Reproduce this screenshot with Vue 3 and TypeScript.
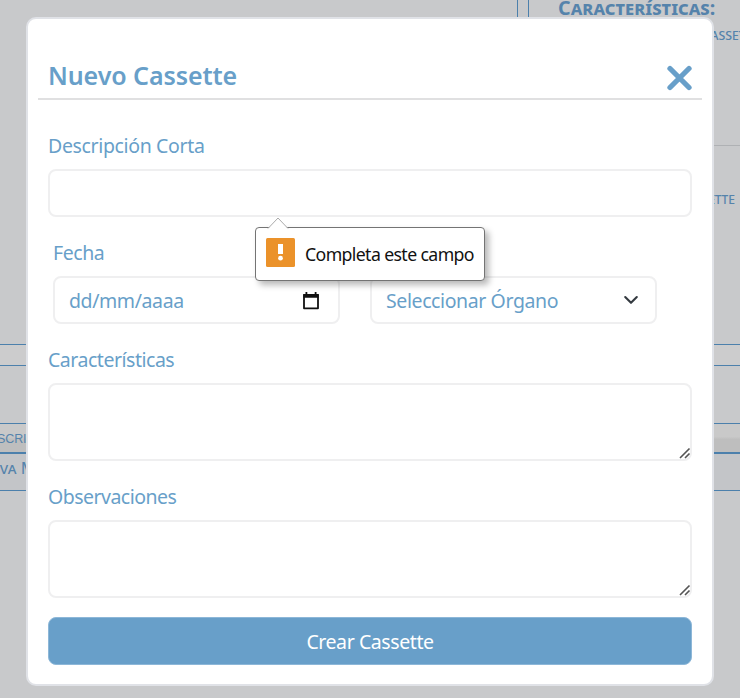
<script setup lang="ts">
import { ref } from 'vue'

const title = 'Nuevo Cassette'
const shortDescription = ref('')
const features = ref('')
const notes = ref('')
</script>

<template>
  <main class="stage">
    <section class="page" aria-hidden="true">
      <div class="top">
        <div class="panel"></div>
        <div class="detail">
          <h2>Características:</h2>
          <p class="first"><span>Cassette</span></p>
          <p class="second"><span>Cassette</span></p>
        </div>
      </div>
      <div class="band"></div>
      <div class="space"></div>
      <div class="thead"><span>DESCRIPCIÓN</span></div>
      <div class="trow"><span>Nueva Muestra</span></div>
    </section>

    <section class="modal" role="dialog">
      <header>
        <h1>{{ title }}</h1>
        <button class="close" type="button" aria-label="Cerrar">
          <svg width="28" height="28" viewBox="0 0 28 28"><path d="M4 4.5 23 23.5M23 4.5 4 23.5" /></svg>
        </button>
      </header>
      <form @submit.prevent>
        <label class="l-desc" for="desc">Descripción Corta</label>
        <div class="anchor">
          <input id="desc" v-model="shortDescription" class="box" type="text" />
          <div class="tip">
            <svg class="arrow" width="22" height="12" viewBox="0 0 22 12"><path d="M1 11.5 11 1 21 11.5" /></svg>
            <svg class="warn" width="29" height="29" viewBox="0 0 29 29">
              <rect width="29" height="29" rx="1.5" fill="#eb922a" />
              <path d="M12 6h5v10h-5z" fill="#fff" />
              <circle cx="14.5" cy="20.2" r="2.4" fill="#fff" />
            </svg>
            <span>Completa este campo</span>
          </div>
        </div>

        <div class="pair">
          <div>
            <label class="l-date">Fecha</label>
            <div class="box picker">
              <span class="date">dd/mm/aaaa</span>
              <svg class="cal" width="18" height="20" viewBox="0 0 18 20">
                <path d="M2 4h14v13.3H2z" fill="none" stroke="#111" stroke-width="1.8" stroke-linejoin="round" />
                <path d="M1.4 3h15.2v3.8H1.4zM3.5 1h1.8v3h-1.8zM12.7 1h1.8v3h-1.8z" fill="#111" />
              </svg>
            </div>
          </div>
          <div>
            <div class="l-date"></div>
            <div class="box picker">
              <span class="organ">Seleccionar Órgano</span>
              <svg class="chev" width="16" height="12" viewBox="0 0 16 12"><path d="m2.2 3 5.8 5.8L13.8 3" /></svg>
            </div>
          </div>
        </div>

        <label class="l-feat" for="feat">Características</label>
        <div class="area">
          <textarea id="feat" v-model="features" class="box"></textarea>
          <svg class="grip" width="12" height="12" viewBox="0 0 12 12"><path d="M1 11 10.5 1.5M6 11l4.5-4.5" /></svg>
        </div>
        <label class="l-notes" for="notes">Observaciones</label>
        <div class="area">
          <textarea id="notes" v-model="notes" class="box"></textarea>
          <svg class="grip" width="12" height="12" viewBox="0 0 12 12"><path d="M1 11 10.5 1.5M6 11l4.5-4.5" /></svg>
        </div>
        <button class="submit" type="submit"><span>Crear Cassette</span></button>
      </form>
    </section>
  </main>
</template>

<style>
body { margin: 0; overflow: hidden; }
</style>

<style scoped>
* { box-sizing: border-box; }
.stage {
  display: grid;
  width: 740px;
  height: 698px;
  overflow: hidden;
  background: #c8c9cb;
  color: #689fc9;
  font-family: "Noto Sans", "Open Sans", sans-serif;
}
.page, .modal { grid-area: 1 / 1; }
.page { height: 698px; overflow: hidden; color: #5583ab; font-variant: small-caps; }
.top { display: flex; gap: 10px; height: 345px; border-bottom: 1px solid #4c80ac; }
.panel { width: 518px; border-right: 1px solid #4c80ac; }
.detail { width: 212px; border-left: 1px solid #4c80ac; overflow: hidden; }
.detail h2 { margin: 0; padding-left: 29px; height: 21px; font-size: 19.6px; line-height: 16px; font-weight: 700; white-space: nowrap; letter-spacing: .05px; }
.detail p { margin: 0; font-size: 15px; line-height: 20px; white-space: nowrap; }
.detail .first { height: 125px; padding: 3px 0 0 172px; border-bottom: 1px solid #afb1b4; }
.detail .second { padding: 42px 5px 0 0; text-align: right; }
.band { height: 21px; background: #cccccd; border-bottom: 1px solid #4c80ac; }
.space { height: 58px; border-bottom: 1px solid #4c80ac; }
.thead { display: flex; height: 30px; background: linear-gradient(#c9c9c9 0 45%, #bebebe 55%); border-bottom: 2px solid #4c80ac; font: 12.5px/30px "Liberation Sans", sans-serif; }
.thead span { margin-left: -20px; letter-spacing: -.15px; }
.trow { display: flex; height: 37px; background: #c3c5c8; border-bottom: 1px solid #4c80ac; font-size: 16.5px; line-height: 28px; }
.trow span { margin-left: -30px; white-space: nowrap; }

.modal {
  position: relative;
  width: 688px;
  height: 669px;
  margin: 17px 0 0 26px;
  padding: 0 10px;
  background: #fff;
  border: 2px solid #e0e2e7;
  border-radius: 10px;
}
header { display: flex; justify-content: space-between; height: 81px; padding: 35px 8px 0 10px; border-bottom: 2px solid #e0e0e1; }
h1 { margin: 0; font-size: 25px; line-height: 43px; font-weight: 600; letter-spacing: -.08px; white-space: nowrap; }
.close { width: 28px; height: 28px; margin-top: 10px; padding: 0; border: 0; background: none; }
.close svg { display: block; }
.close path { fill: none; stroke: #689fc9; stroke-width: 5.3; stroke-linecap: round; }
form { padding: 0 10px; }
label { display: block; height: 30px; font-size: 19.5px; line-height: 30px; white-space: nowrap; }
.box { display: block; width: 100%; height: 48px; margin: 0; border: 2px solid #efeff0; border-radius: 8px; background: #fff; font: inherit; outline: 0; resize: none; }
.l-desc { margin: 31px 0 8px; letter-spacing: -.35px; }
.anchor { position: relative; }
.tip {
  position: absolute;
  z-index: 2;
  left: 207px;
  top: 58px;
  display: flex;
  align-items: center;
  gap: 10px;
  width: 230px;
  height: 54px;
  padding: 0 10px;
  border: 1px solid #747474;
  border-radius: 4px;
  background: #fff;
  box-shadow: 4px 4px 6px rgb(0 0 0 / 28%);
  color: #111;
  font-size: 17.7px;
  letter-spacing: -.62px;
  white-space: nowrap;
}
.arrow { position: absolute; left: 11px; top: -11px; }
.arrow path { fill: #fff; stroke: #aaa; }
.warn { flex: none; margin-top: -3px; }
.pair { display: grid; grid-template-columns: 287px 287px; gap: 30px; padding: 21px 0 0 5px; }
.l-date { height: 38px; letter-spacing: -.45px; }
.picker { display: flex; align-items: center; justify-content: space-between; padding: 1px 16px 0 14px; font-size: 19.5px; white-space: nowrap; }
.date { letter-spacing: -.4px; }
.organ { letter-spacing: -.4px; }
.cal { margin-right: 2px; }
.chev { margin-top: -2px; }
.chev path { fill: none; stroke: #343a40; stroke-width: 2.1; stroke-linecap: round; stroke-linejoin: round; }
.l-feat { margin: 21px 0 8px; letter-spacing: -.48px; }
.l-notes { margin: 21px 0 8px; letter-spacing: -.52px; }
.area { position: relative; }
.area .box { height: 78px; }
.grip { position: absolute; right: 1px; bottom: 2px; }
.grip path { fill: none; stroke: #555; stroke-width: 1.6; }
.submit { display: block; width: 100%; height: 48px; margin-top: 19px; padding: 1px 0 0; border: 1px solid #8db7d8; border-radius: 8px; background: #689fc9; color: #fff; font: 19.5px/45px "Noto Sans", sans-serif; letter-spacing: -.42px; }
</style>
